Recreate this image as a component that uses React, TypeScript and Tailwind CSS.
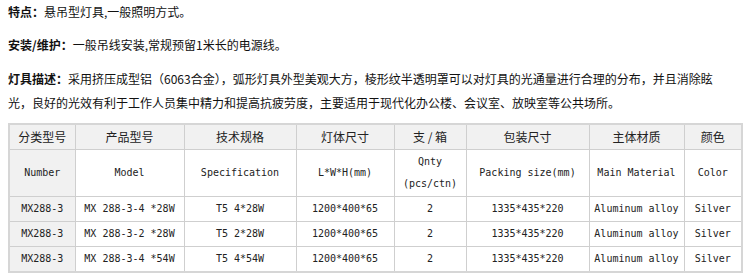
const rows = [
  ["MX288-3", "MX 288-3-4 *28W", "T5 4*28W", "1200*400*65", "2", "1335*435*220", "Aluminum alloy", "Silver"],
  ["MX288-3", "MX 288-3-2 *28W", "T5 2*28W", "1200*400*65", "2", "1335*435*220", "Aluminum alloy", "Silver"],
  ["MX288-3", "MX 288-3-4 *54W", "T5 4*54W", "1200*400*65", "2", "1335*435*220", "Aluminum alloy", "Silver"],
];

const headCn = ["分类型号", "产品型号", "技术规格", "灯体尺寸", "支 / 箱", "包装尺寸", "主体材质", "颜色"];

const cell = "border border-[#cfcfcf] px-0 py-px text-center leading-[22px] whitespace-nowrap";
const cnFont = "font-['Noto_Sans_CJK_SC','Noto_Sans',sans-serif] text-[12px]";
const monoFont = "font-['DejaVu_Sans_Mono','Liberation_Mono',monospace] text-[10px]";

export default function App() {
  return (
    <div className={`w-[747px] h-[277px] bg-white overflow-hidden text-[#111] ${cnFont}`}>
      <div className="pl-2 pr-[19px] leading-[24px]">
        <p>
          <b>特点：</b>悬吊型灯具,一般照明方式。
        </p>
        <p className="mt-[9px]">
          <b>安装/维护：</b>一般吊线安装,常规预留1米长的电源线。
        </p>
        <p className="mt-[10px]">
          <b>灯具描述：</b>采用挤压成型铝（6063合金），弧形灯具外型美观大方，棱形纹半透明罩可以对灯具的光通量进行合理的分布，并且消除眩光，良好的光效有利于工作人员集中精力和提高抗疲劳度，主要适用于现代化办公楼、会议室、放映室等公共场所。
        </p>
      </div>

      {/* spec table */}
      <table className="ml-2 mt-2 border-collapse border-2 border-[#d6d6d6] text-[#222]">
        <colgroup>
          <col className="w-[66px]" />
          <col className="w-[109px]" />
          <col className="w-[112px]" />
          <col className="w-[98px]" />
          <col className="w-[72px]" />
          <col className="w-[123px]" />
          <col className="w-[95px]" />
          <col className="w-[58px]" />
        </colgroup>
        <tbody>
          <tr className="bg-[#f1f1f1]">
            {headCn.map((h) => (
              <td key={h} className={`${cell} ${cnFont}`}>
                {h}
              </td>
            ))}
          </tr>
          <tr className={monoFont}>
            <td className={`${cell} bg-[#f1f1f1]`}>Number</td>
            <td className={cell}>Model</td>
            <td className={cell}>Specification</td>
            <td className={cell}>L*W*H(mm)</td>
            <td className={cell}>
              Qnty
              <br />
              (pcs/ctn)
            </td>
            <td className={cell}>Packing size(mm)</td>
            <td className={cell}>Main Material</td>
            <td className={cell}>Color</td>
          </tr>
          {rows.map((r, ri) => (
            <tr key={ri} className={monoFont}>
              {r.map((v, i) => (
                <td key={i} className={`${cell} ${i === 0 ? "bg-[#f1f1f1]" : ""}`}>
                  {v}
                </td>
              ))}
            </tr>
          ))}
        </tbody>
      </table>
    </div>
  );
}
